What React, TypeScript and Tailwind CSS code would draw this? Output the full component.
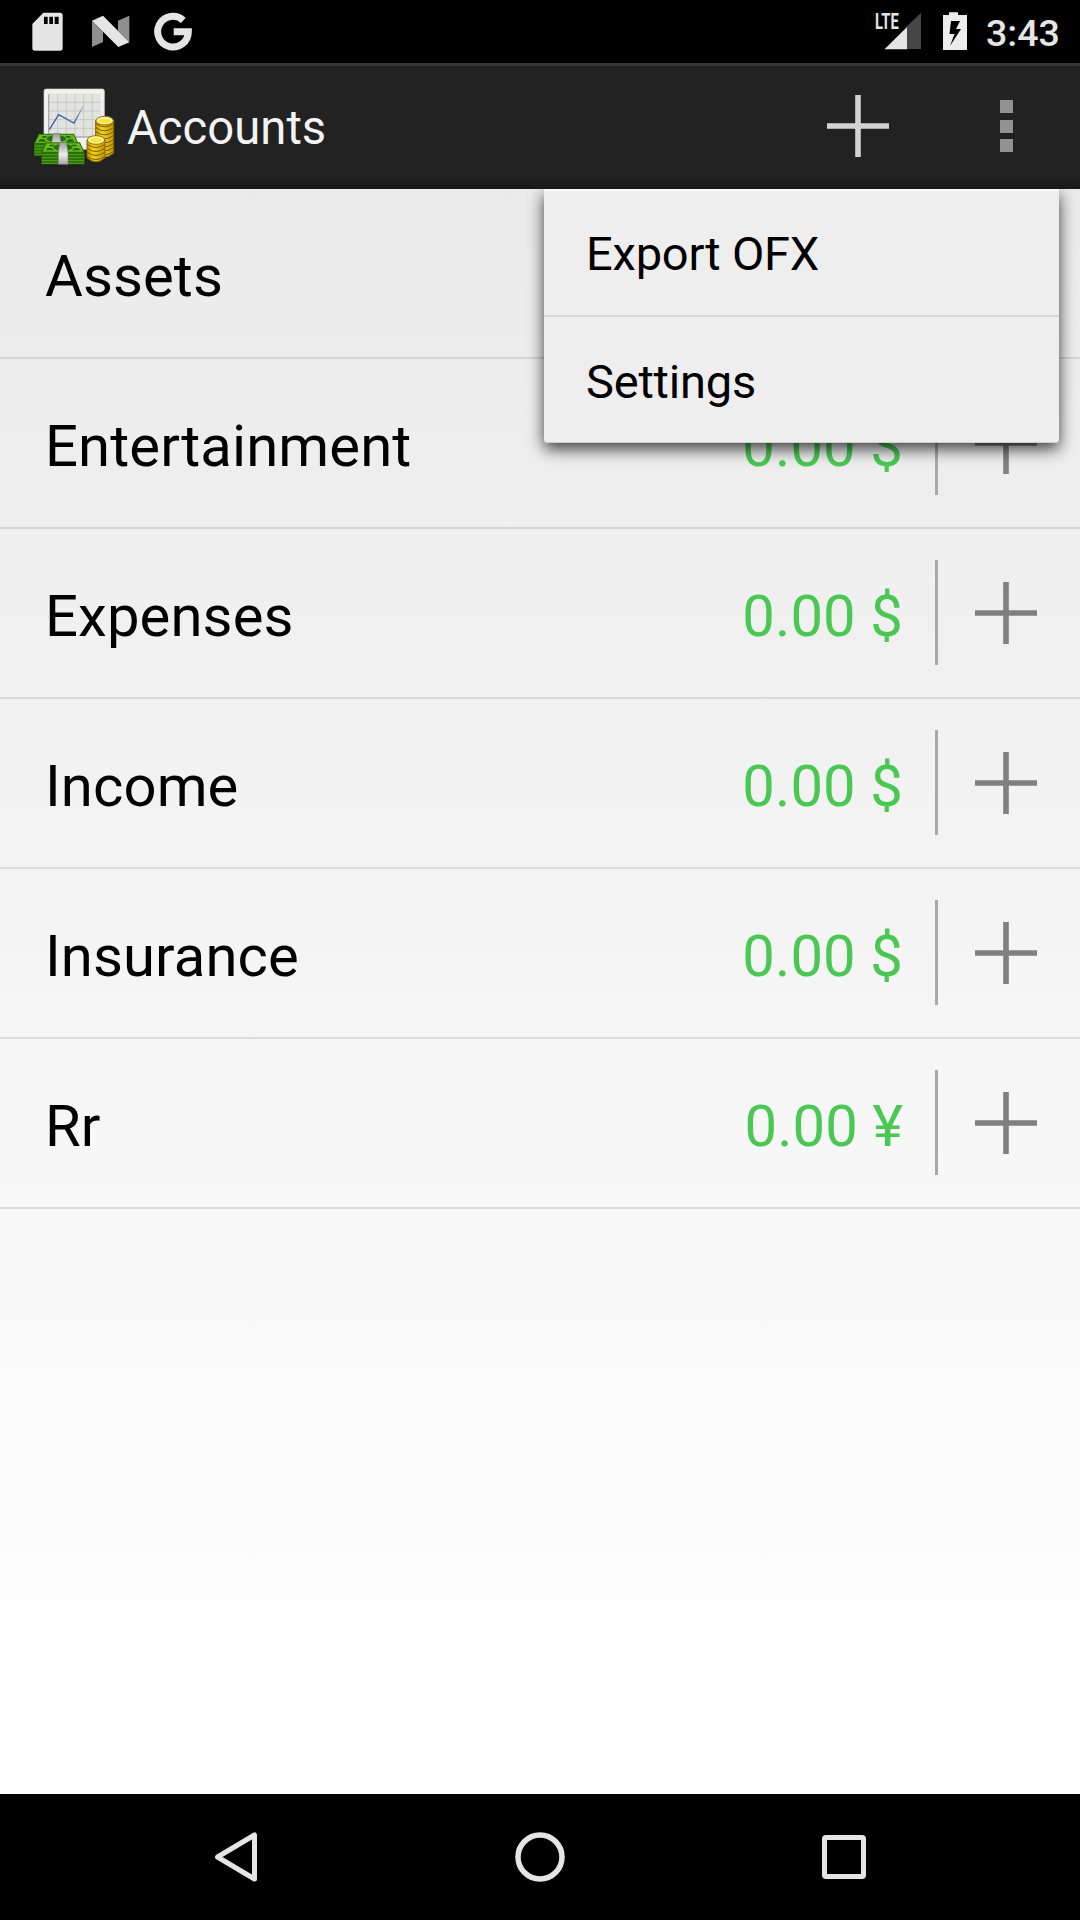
import React from "react";

type Account = { name: string; balance?: string };

const accounts: Account[] = [
  { name: "Assets" },
  { name: "Entertainment", balance: "0.00 $" },
  { name: "Expenses", balance: "0.00 $" },
  { name: "Income", balance: "0.00 $" },
  { name: "Insurance", balance: "0.00 $" },
  { name: "Rr", balance: "0.00 ¥" },
];

function Plus({ color }: { color: string }) {
  return (
    <svg width="64" height="64" viewBox="0 0 64 64" fill={color} className="shrink-0">
      <path d="M29.2 1h5.6v28.2H63v5.6H34.8V63h-5.6V34.8H1v-5.6h28.2z" />
    </svg>
  );
}

function StatusBar() {
  return (
    <div className="flex h-[63px] shrink-0 items-start justify-between bg-black text-[#e5e5e5]">
      <svg width="200" height="63" viewBox="0 0 600 189">
        <path
          fill="#e5e5e5"
          fillRule="evenodd"
          d="M130 38h50q8 0 8 8v98q0 8-8 8h-75q-8 0-8-8V72zM132 50v22h11V50zm16 0v22h11V50zm16 0v22h12V50z"
        />
        <path fill="#8f8f8f" d="M276 62l33 34v30l-33 15zM354 62l34-15v80l-34-35z" />
        <path fill="#e5e5e5" d="M276 62l33-15 79 80-33 14z" />
        <path
          fill="none"
          stroke="#e5e5e5"
          strokeWidth="21"
          d="M550 61A46 46 0 1 0 565 95H521"
        />
      </svg>
      <div className="flex">
        <svg width="108" height="63" viewBox="0 0 108 63">
          <text
            x="0"
            y="0"
            transform="translate(3 29) scale(.67 1)"
            fill="#e5e5e5"
            className="font-['Roboto'] text-[22px] font-bold"
          >
            LTE
          </text>
          <path fill="#464646" d="M34 27l15-14v36H34z" />
          <path fill="#e5e5e5" d="M12.5 49.3L35 27v22.300z" />
          <path
            fill="#ececec"
            fillRule="evenodd"
            d="M77 12.300h9V15h9v35H71V15h6zM79 21l-1.500 13h5l-4.500 12 11-17h-5l4-8z"
          />
        </svg>
        <div className="w-[100px] pt-[14px] pl-[6px] text-[37.500px] leading-[38px] font-medium">3:43</div>
      </div>
    </div>
  );
}

function CoinStack({ x, top, bottom }: { x: number; top: number; bottom: number }) {
  const rings: number[] = [];
  for (let y = bottom - 12; y > top + 14; y -= 12) rings.push(y);
  return (
    <g>
      <path
        d={`M${x} ${top + 13}V${bottom - 12}q27 25 54 0V${top + 13}z`}
        fill="url(#coin)"
        stroke="#8a6500"
        strokeWidth="3"
      />
      {rings.map((y) => (
        <path key={y} d={`M${x + 1} ${y - 4}q26 19 52 0`} fill="none" stroke="#7d5c00" strokeWidth="3" />
      ))}
      <ellipse cx={x + 27} cy={top + 13} rx="26" ry="13" fill="#f6efb2" stroke="#94700a" strokeWidth="3" />
      <ellipse cx={x + 27} cy={top + 14} rx="18" ry="7" fill="#ffe52e" />
    </g>
  );
}

function Bills({ x, y, w, h }: { x: number; y: number; w: number; h: number }) {
  const m = x + w / 2;
  return (
    <g>
      <path d={`M${x + 14} ${y}H${x + w - 14}L${x + w} ${y + 30}V${y + h}H${x}V${y + 30}z`} fill="#276d08" />
      <path d={`M${x + 16} ${y + 3}H${x + w - 16}L${x + w - 4} ${y + 28}H${x + 4}z`} fill="#69ba23" />
      <path
        d={`M${x + 26} ${y + 7}h14l-5 5h-12zM${x + 13} ${y + 24}l5-7h12l8 7zM${x + w - 26} ${y + 7}h-14l5 5h12zM${x + w - 13} ${y + 24}l-5-7h-12l-8 7z`}
        fill="#1e6a08"
      />
      <ellipse cx={m} cy={y + 15} rx="29" ry="10" fill="#236f08" />
      <path
        d={`M${x + 2} ${y + 37}H${x + w - 2}M${x + 2} ${y + 46}H${x + w - 2}M${x + 2} ${y + 55}H${x + w - 2}M${x + 2} ${y + h - 3}H${x + w - 2}`}
        stroke="#4b9c13"
        strokeWidth="4"
      />
      <path d={`M${m - 10} ${y}H${m + 10}L${m + 15} ${y + 30}V${y + h}H${m - 14}V${y + 30}z`} fill="url(#band)" stroke="#777" strokeWidth="2" />
    </g>
  );
}

function AppIcon() {
  return (
    <svg width="86" height="80" viewBox="30 48 258 240" className="mb-[4px]">
      <defs>
        <linearGradient id="coin" x1="0" x2="1">
          <stop offset="0" stopColor="#c59600" />
          <stop offset=".35" stopColor="#f1d21a" />
          <stop offset="1" stopColor="#c69700" />
        </linearGradient>
        <linearGradient id="band" x1="0" x2="0" y1="0" y2="1">
          <stop offset="0" stopColor="#9d9d9d" />
          <stop offset=".55" stopColor="#ececec" />
          <stop offset="1" stopColor="#a8a8a8" />
        </linearGradient>
        <linearGradient id="trend" x1="0" x2="1">
          <stop offset="0" stopColor="#3465a4" />
          <stop offset=".75" stopColor="#3465a4" />
          <stop offset="1" stopColor="#3465a4" stopOpacity=".2" />
        </linearGradient>
      </defs>
      <rect x="72" y="57" width="181" height="181" rx="6" fill="#f1f1f0" stroke="#d6d6d4" strokeWidth="2" />
      <rect x="84" y="71" width="158" height="130" fill="#e3e4e1" />
      <path
        d="M113 72V200M139 72V200M165 72V200M191 72V200M217 72V200M86 97H241M86 123H241M86 149H241M86 175H241"
        stroke="#c7c9c5"
        strokeWidth="3"
      />
      <path d="M86 73V201H241" fill="none" stroke="#aaa" strokeWidth="4" />
      <path d="M88 179L116 134L162 159L190 108" fill="none" stroke="url(#trend)" strokeWidth="4" />
      <CoinStack x={227} top={139} bottom={261} />
      <CoinStack x={201} top={197} bottom={275} />
      <Bills x={42} y={191} w={134} h={66} />
      <Bills x={64} y={217} w={130} h={66} />
    </svg>
  );
}

function ActionBar() {
  return (
    <div className="flex h-[126px] shrink-0 items-center border-t-[3px] border-[#373737] bg-linear-to-b from-[#222222] from-90% to-[#181818] pl-[30px]">
      <AppIcon />
      <h1 className="pt-[1px] pl-[11px] text-[47.250px] leading-[56px] text-[#f3f3f3]">Accounts</h1>
      <div className="mr-[110px] ml-auto pb-[3px]">
        <Plus color="#d3d3d3" />
      </div>
      <div className="mr-[67px] flex flex-col gap-[6.500px] pb-[3px]">
        <span className="size-[13px] bg-[#929292]" />
        <span className="size-[13px] bg-[#929292]" />
        <span className="size-[13px] bg-[#929292]" />
      </div>
    </div>
  );
}

function AccountRow({ name, balance }: Account) {
  return (
    <li className="flex h-[170px] items-center border-b-2 border-black/10 pl-[45px]">
      <span className="pt-[5px] text-[58px] leading-[68px] tracking-[0.1px] text-black">{name}</span>
      <span className="ml-auto pt-[5px] pr-[32px] text-[58px] leading-[68px] tracking-[0.1px] text-[#4bc854]">
        {balance}
      </span>
      <span className="mr-[36px] mb-[2px] h-[105px] w-[3px] bg-[#a9a9a9]" />
      <span className="mr-[42px]">
        <Plus color="#808080" />
      </span>
    </li>
  );
}

function OverflowMenu() {
  return (
    <div className="absolute top-0 right-[21px] w-[515px] divide-y-2 divide-[#d6d6d6] rounded-b-[4px] bg-[#eeeeee] text-[47px] leading-[56px] tracking-[-0.2px] text-black shadow-[0_6px_16px_rgba(0,0,0,0.75),inset_0_-1px_0_#cfcfcf,inset_0_2px_0_#f7f7f7]">
      <div className="flex h-[128px] items-center pt-[3px] pl-[42px]">Export OFX</div>
      <div className="flex h-[126px] items-center pt-[3px] pl-[42px]">Settings</div>
    </div>
  );
}

function NavigationBar() {
  return (
    <div className="flex h-[126px] shrink-0 items-center justify-between bg-black pr-[213px] pl-[212px]">
      <svg width="48" height="52" viewBox="0 0 48 52" fill="none" stroke="#e5e5e5" strokeWidth="5" strokeLinejoin="round">
        <path d="M5.500 26L42.500 4v44z" />
      </svg>
      <svg width="52" height="52" viewBox="0 0 52 52" fill="none" stroke="#e5e5e5" strokeWidth="5.500" className="mr-[2px]">
        <circle cx="26" cy="26" r="22" />
      </svg>
      <svg width="46" height="46" viewBox="0 0 46 46" fill="none" stroke="#e5e5e5" strokeWidth="5">
        <rect x="3.500" y="3.500" width="39" height="39" rx="1.500" />
      </svg>
    </div>
  );
}

export default function App() {
  return (
    <div className="flex h-[1920px] w-[1080px] flex-col overflow-hidden bg-linear-to-b from-[#e8e8e8] to-white to-90% font-['Roboto',sans-serif]">
      <StatusBar />
      <ActionBar />
      <main className="relative flex-1 overflow-hidden">
        <ul>
          {accounts.map((a) => (
            <AccountRow key={a.name} {...a} />
          ))}
        </ul>
        <OverflowMenu />
      </main>
      <NavigationBar />
    </div>
  );
}
